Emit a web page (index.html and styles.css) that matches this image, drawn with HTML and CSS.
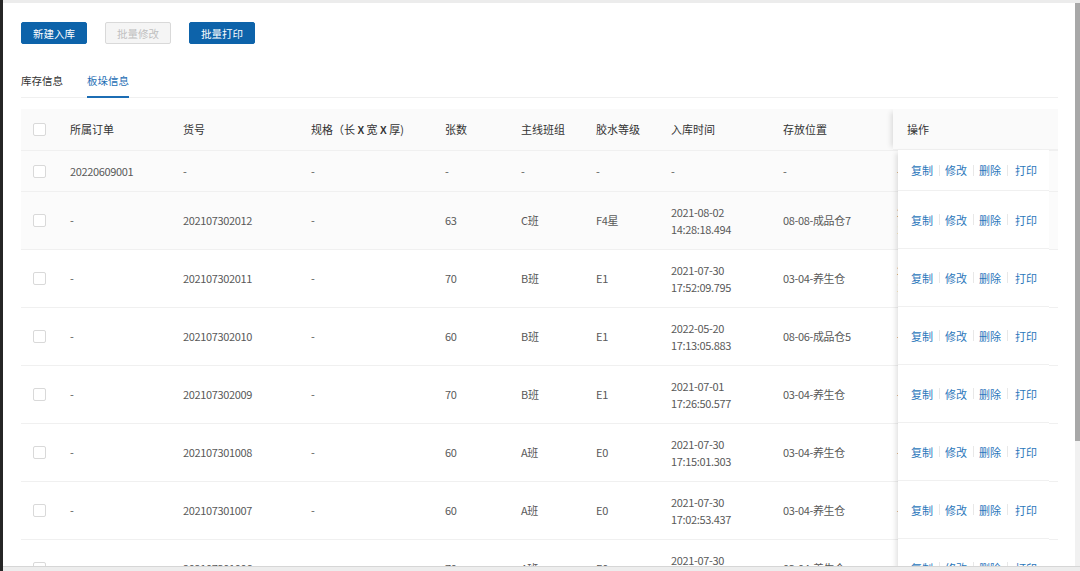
FILE: index.html
```html
<!DOCTYPE html>
<html lang="zh-CN">
<head>
    <meta charset="UTF-8">
    <meta name="viewport" content="width=device-width, initial-scale=1.0">
    <title>板垛信息</title>
    <link rel="stylesheet" href="styles.css">
</head>
<body>
<div class="screen">
    <div class="screen-body">
        <div class="page">
            <div class="toolbar">
                <button class="btn btn-primary">新建入库</button>
                <button class="btn" disabled>批量修改</button>
                <button class="btn btn-primary">批量打印</button>
            </div>

            <div class="tabs">
                <div class="tab">库存信息</div>
                <div class="tab active">板垛信息</div>
            </div>

            <div class="table-wrap">
                <table class="grid">
                    <colgroup>
                        <col style="width: 33px">
                        <col style="width: 113px">
                        <col style="width: 128px">
                        <col style="width: 134px">
                        <col style="width: 76px">
                        <col style="width: 75px">
                        <col style="width: 75px">
                        <col style="width: 112px">
                        <col style="width: 114px">
                        <col style="width: 180px">
                    </colgroup>
                    <thead>
                        <tr>
                            <th class="check-cell"><span class="checkbox"></span></th>
                            <th>所属订单</th>
                            <th>货号</th>
                            <th>规格（长 <b>X</b> 宽 <b>X</b> 厚)</th>
                            <th>张数</th>
                            <th>主线班组</th>
                            <th>胶水等级</th>
                            <th>入库时间</th>
                            <th>存放位置</th>
                            <th>出库时间</th>
                        </tr>
                    </thead>
                    <tbody>
                        <tr class="shaded">
                            <td class="check-cell"><span class="checkbox"></span></td>
                            <td>20220609001</td><td>-</td><td>-</td><td>-</td><td>-</td><td>-</td><td>-</td><td>-</td><td>-</td>
                        </tr>
                        <tr class="shaded">
                            <td class="check-cell"><span class="checkbox"></span></td>
                            <td>-</td><td>202107302012</td><td>-</td><td>63</td><td>C班</td><td>F4星</td>
                            <td>2021-08-02<br>14:28:18.494</td><td>08-08-成品仓7</td>
                            <td>2021-08-05<br><span class="late">16:02:11.204</span></td>
                        </tr>
                        <tr>
                            <td class="check-cell"><span class="checkbox"></span></td>
                            <td>-</td><td>202107302011</td><td>-</td><td>70</td><td>B班</td><td>E1</td>
                            <td>2021-07-30<br>17:52:09.795</td><td>03-04-养生仓</td>
                            <td>2021-08-02<br><span class="late">10:41:37.120</span></td>
                        </tr>
                        <tr>
                            <td class="check-cell"><span class="checkbox"></span></td>
                            <td>-</td><td>202107302010</td><td>-</td><td>60</td><td>B班</td><td>E1</td>
                            <td>2022-05-20<br>17:13:05.883</td><td>08-06-成品仓5</td><td>-</td>
                        </tr>
                        <tr>
                            <td class="check-cell"><span class="checkbox"></span></td>
                            <td>-</td><td>202107302009</td><td>-</td><td>70</td><td>B班</td><td>E1</td>
                            <td>2021-07-01<br>17:26:50.577</td><td>03-04-养生仓</td><td>-</td>
                        </tr>
                        <tr>
                            <td class="check-cell"><span class="checkbox"></span></td>
                            <td>-</td><td>202107301008</td><td>-</td><td>60</td><td>A班</td><td>E0</td>
                            <td>2021-07-30<br>17:15:01.303</td><td>03-04-养生仓</td><td>-</td>
                        </tr>
                        <tr>
                            <td class="check-cell"><span class="checkbox"></span></td>
                            <td>-</td><td>202107301007</td><td>-</td><td>60</td><td>A班</td><td>E0</td>
                            <td>2021-07-30<br>17:02:53.437</td><td>03-04-养生仓</td><td>-</td>
                        </tr>
                        <tr>
                            <td class="check-cell"><span class="checkbox"></span></td>
                            <td>-</td><td>202107301006</td><td>-</td><td>70</td><td>A班</td><td>E0</td>
                            <td>2021-07-30<br>16:58:20.112</td><td>03-04-养生仓</td><td>-</td>
                        </tr>
                    </tbody>
                </table>

                <!-- 操作列固定在右侧 -->
                <div class="fixed-right">
                    <div class="fixed-head">操作</div>
                    <div class="fixed-body">
                        <div class="op-row single"><a>复制</a><i></i><a>修改</a><i></i><a>删除</a><i></i><a class="print">打印</a></div>
                        <div class="op-row"><a>复制</a><i></i><a>修改</a><i></i><a>删除</a><i></i><a class="print">打印</a></div>
                        <div class="op-row"><a>复制</a><i></i><a>修改</a><i></i><a>删除</a><i></i><a class="print">打印</a></div>
                        <div class="op-row"><a>复制</a><i></i><a>修改</a><i></i><a>删除</a><i></i><a class="print">打印</a></div>
                        <div class="op-row"><a>复制</a><i></i><a>修改</a><i></i><a>删除</a><i></i><a class="print">打印</a></div>
                        <div class="op-row"><a>复制</a><i></i><a>修改</a><i></i><a>删除</a><i></i><a class="print">打印</a></div>
                        <div class="op-row"><a>复制</a><i></i><a>修改</a><i></i><a>删除</a><i></i><a class="print">打印</a></div>
                        <div class="op-row"><a>复制</a><i></i><a>修改</a><i></i><a>删除</a><i></i><a class="print">打印</a></div>
                    </div>
                </div>
            </div>
        </div>

        <div class="vscroll"><div class="vscroll-thumb"></div></div>
    </div>
    <div class="hscroll"></div>
</div>
</body>
</html>
```

FILE: styles.css
```css
html, body {
    margin: 0;
    padding: 0;
}

body {
    font-family: "Noto Sans CJK SC", sans-serif;
    font-size: 11px;
    color: #595959;
    background: #fff;
}

.screen {
    height: 571px;
    display: flex;
    flex-direction: column;
    border-left: 3px solid #262626;
    box-sizing: border-box;
    overflow: hidden;
}

.screen-body {
    flex: 1;
    min-height: 0;
    display: flex;
    border-top: 3px solid #ececec;
}

.page {
    flex: 1;
    min-width: 0;
    padding: 19px 17px 0 18px;
    overflow: hidden;
}

/* scrollbars */
.vscroll {
    width: 5px;
    background: #f1f1f1;
}

.vscroll-thumb {
    height: 438px;
    background: #a8a8a8;
}

.hscroll {
    height: 4px;
    border-top: 1px solid #d6d6d6;
    background: #ededed;
}

/* toolbar */
.toolbar {
    display: flex;
    gap: 18px;
}

.btn {
    height: 22px;
    padding: 0 11px;
    font-family: inherit;
    font-size: 10.5px;
    border-radius: 2px;
    border: 1px solid #d9d9d9;
    background: #f5f5f5;
    color: #bfbfbf;
}

.btn-primary {
    background: #0d63aa;
    border-color: #0d63aa;
    color: #fff;
}

/* tabs */
.tabs {
    display: flex;
    gap: 24px;
    margin-top: 26px;
    border-bottom: 1px solid #f0f0f0;
}

.tab {
    padding: 2px 0 7px;
    font-size: 10.5px;
    color: #333;
    line-height: 17px;
    border-bottom: 2px solid transparent;
    margin-bottom: -1px;
}

.tab.active {
    color: #1c6db4;
    border-bottom-color: #1c6db4;
}

/* table */
.table-wrap {
    position: relative;
    margin-top: 11px;
    overflow: hidden;
}

.grid {
    table-layout: fixed;
    width: 1040px;
    border-collapse: separate;
    border-spacing: 0;
}

.grid th,
.grid td {
    padding: 11.5px 16px;
    line-height: 17px;
    text-align: left;
    border-bottom: 1px solid #f0f0f0;
    white-space: nowrap;
    overflow: hidden;
}

.grid td {
    letter-spacing: -0.35px;
}

.grid th {
    background: #fafafa;
    color: #333;
    font-weight: normal;
}

.grid th b {
    font-weight: bold;
    font-family: "Liberation Sans", sans-serif;
    font-size: 10px;
}

.grid tr.shaded td {
    background: #fbfbfb;
}

.grid .check-cell {
    padding-left: 12px;
    padding-right: 8px;
}

.checkbox {
    display: inline-block;
    width: 11px;
    height: 11px;
    border: 1px solid #d9d9d9;
    border-radius: 2px;
    background: #fff;
    vertical-align: -2px;
}

.late {
    color: #b07a3a;
}

/* fixed action column */
.fixed-right {
    position: absolute;
    top: 0;
    right: 0;
    width: 165px;
}

.fixed-head {
    height: 40px;
    line-height: 40px;
    padding-left: 14px;
    background: #fafafa;
    color: #333;
    border-bottom: 1px solid #f0f0f0;
    box-shadow: -5px 0 5px -3px rgba(0, 0, 0, 0.12);
}

.fixed-body {
    margin: 0 9px 0 5px;
    background: #fff;
    box-shadow: -5px 0 5px -3px rgba(0, 0, 0, 0.12);
}

.op-row {
    height: 57px;
    display: flex;
    align-items: center;
    padding-left: 13px;
    border-bottom: 1px solid #f0f0f0;
}

.op-row.single {
    height: 40px;
}

.op-row a {
    color: #2b77bb;
    cursor: pointer;
}

.op-row i {
    width: 1px;
    height: 11px;
    margin: 0 5.5px;
    background: #e8e8e8;
}

.op-row a.print {
    margin-left: 2px;
}
```
